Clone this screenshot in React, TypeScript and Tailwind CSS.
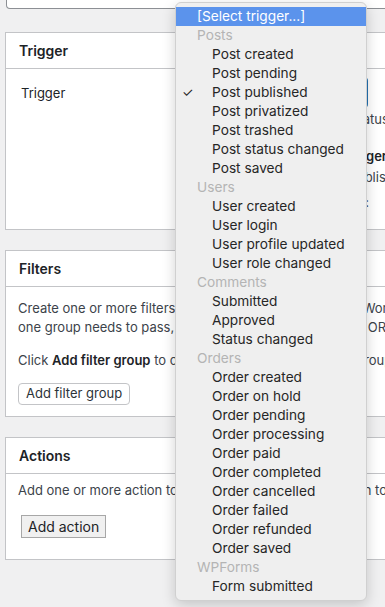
import React from "react";

const groups: { label: string; items: string[] }[] = [
  {
    label: "Posts",
    items: [
      "Post created",
      "Post pending",
      "Post published",
      "Post privatized",
      "Post trashed",
      "Post status changed",
      "Post saved",
    ],
  },
  {
    label: "Users",
    items: ["User created", "User login", "User profile updated", "User role changed"],
  },
  { label: "Comments", items: ["Submitted", "Approved", "Status changed"] },
  {
    label: "Orders",
    items: [
      "Order created",
      "Order on hold",
      "Order pending",
      "Order processing",
      "Order paid",
      "Order completed",
      "Order cancelled",
      "Order failed",
      "Order refunded",
      "Order saved",
    ],
  },
  { label: "WPForms", items: ["Form submitted"] },
];

function Panel({ title, children }: { title: string; children: React.ReactNode }) {
  return (
    <div className="border border-[#c3c4c7] bg-white">
      <div className="flex h-[36px] items-center border-b border-[#c3c4c7] px-[13px] text-[14px] font-semibold text-[#1d2327]">
        {title}
      </div>
      {children}
    </div>
  );
}

function TriggerMenu() {
  return (
    <div className="absolute left-[175px] top-[2px] w-[192px] rounded-[6px] border border-[#d0d0d0] bg-[#efefef] py-[4px] text-[13.7px] leading-[19px] text-[#262626] shadow-[0_4px_14px_rgba(0,0,0,0.18)]">
      <div className="h-[19px] bg-[#5b93ec] pl-[21px] text-white">[Select trigger...]</div>
      {groups.map((g) => (
        <div key={g.label}>
          <div className="h-[19px] pl-[21px] text-[#b4b4b4]">{g.label}</div>
          {g.items.map((item) => (
            <div key={item} className="relative h-[19px] pl-[36px]">
              {item === "Post published" && (
                <span className="absolute left-[6px] top-0 text-[13px]">✓</span>
              )}
              {item}
            </div>
          ))}
        </div>
      ))}
    </div>
  );
}

// a text line whose end is pinned; the middle sits under the open menu
function Line({ left, right, w, className = "" }: { left?: React.ReactNode; right: React.ReactNode; w: string; className?: string }) {
  return (
    <div className={`flex justify-between gap-2 whitespace-nowrap leading-[19px] ${w} ${className}`}>
      <span>{left}</span>
      <span>{right}</span>
    </div>
  );
}

export default function App() {
  return (
    <div
      className="relative h-[607px] w-[385px] overflow-hidden bg-[#f0f0f1] text-[13px] text-[#3c434a]"
      style={{ fontFamily: "Inter, 'Noto Sans', sans-serif" }}
    >
      <div className="w-[640px] pl-[5px]">
        {/* textarea bottom edge */}
        <div className="ml-[1px] h-[9px] rounded-b-[4px] border-x border-b border-[#8c8f94] bg-white" />

        <div className="mt-[23px]">
          <Panel title="Trigger">
            <div className="flex h-[160px]">
              <div className="w-[169px] shrink-0 pl-[15px] pt-[15px] leading-[19px] text-[#1d2327]">Trigger</div>
              <div className="pt-[8px]">
                <div className="h-[31px] w-[193px] rounded-[4px] border-2 border-[#2271b1] bg-white" />
                <Line className="mt-[2px]" w="w-[210px]" right="Fires when a post changes status" />
                <Line
                  className="mt-[18px] font-semibold text-[#1d2327]"
                  w="w-[212px]"
                  right="About this trigger"
                />
                <Line className="mt-[2px]" w="w-[234px]" right="Runs when a post is published" />
                <Line className="mt-[6px]" w="w-[194px]" right="Available tags:" />
              </div>
            </div>
          </Panel>
        </div>

        <div className="mt-[20px]">
          <Panel title="Filters">
            <div className="px-[12px] pb-[11px] pt-[12px]">
              <Line w="w-[403px]" left="Create one or more filters" right="to restrict when this Workflow" />
              <Line w="w-[368px]" left="one group needs to pass," right="groups are joined with OR" />
              <Line
                className="mt-[14px]"
                w="w-[378px]"
                left={
                  <>
                    Click <b className="font-semibold text-[#1d2327]">Add filter group</b> to create
                  </>
                }
                right="a new filter group."
              />
              <button className="mt-[13px] h-[22px] rounded-[4px] border border-[#c3c4c7] bg-white px-[7px] text-[13px] text-[#2c3338]">
                Add filter group
              </button>
            </div>
          </Panel>
        </div>

        <div className="mt-[20px]">
          <Panel title="Actions">
            <div className="px-[12px] pb-[21px] pt-[7px]">
              <Line w="w-[369px]" left="Add one or more action to" right="and set up an action to" />
              <button className="ml-[3px] mt-[15px] h-[23px] border border-[#a7a7a7] bg-[#f0f0f0] px-[6px] text-[14px] text-[#1d2327]">
                Add action
              </button>
            </div>
          </Panel>
        </div>
      </div>

      <TriggerMenu />
    </div>
  );
}
